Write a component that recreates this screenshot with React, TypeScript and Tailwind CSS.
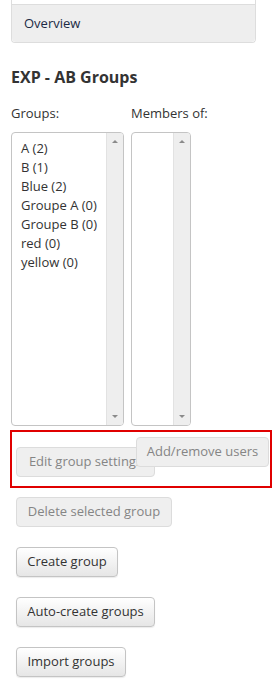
import React from "react";

const items = ["A (2)", "B (1)", "Blue (2)", "Groupe A (0)", "Groupe B (0)", "red (0)", "yellow (0)"];

function Scrollbar() {
  return (
    <div className="flex h-full w-[17px] flex-col justify-between bg-[#eeeeee] border-l border-[#e2e2e2]">
      <div className="flex h-[17px] items-center justify-center">
        <div className="h-0 w-0 border-x-[3px] border-b-[3px] border-x-transparent border-b-[#8a8a8a]" />
      </div>
      <div className="flex h-[17px] items-center justify-center">
        <div className="h-0 w-0 border-x-[3px] border-t-[3px] border-x-transparent border-t-[#8a8a8a]" />
      </div>
    </div>
  );
}

function Btn({ label, w, disabled, className = "" }: { label: string; w: string; disabled?: boolean; className?: string }) {
  return (
    <div
      className={
        "flex h-[30px] shrink-0 items-center justify-center rounded-[4px] border text-[13px] " +
        (disabled
          ? "border-[#dcdcdc] bg-[#efefef] text-[#858585] "
          : "border-[#c4c4c4] bg-gradient-to-b from-[#ffffff] to-[#e6e6e6] text-[#333333] shadow-[0_1px_1px_rgba(0,0,0,0.08)] ") +
        w +
        " " +
        className
      }
    >
      {label}
    </div>
  );
}

export default function App() {
  return (
    <div className="h-[684px] w-[274px] overflow-hidden bg-white text-[#333333]" style={{ fontFamily: '"Open Sans", "Liberation Sans", sans-serif' }}>
      <div className="ml-[11px] w-[245px] rounded-b-[4px] border-x border-b border-[#dddddd]">
        <div className="h-[4px] bg-white" />
        <div className="flex h-[38px] items-center rounded-b-[4px] border-t border-[#dddddd] bg-[#eeeeee] pl-[12px] text-[13px] text-[#1b2a45]">
          Overview
        </div>
      </div>

      <div className="ml-[11px] mt-[24px] text-[16px] font-bold leading-[20px] text-[#333333]">EXP - AB Groups</div>

      <div className="ml-[11px] mt-[17px] flex text-[13px] leading-[18px]">
        <div className="w-[120px]">Groups:</div>
        <div>Members of:</div>
      </div>

      <div className="ml-[11px] mt-[10px] flex gap-[7px]">
        <div className="flex h-[294px] w-[113px] overflow-hidden rounded-[4px] border border-[#c4c4c4]">
          <div className="flex-1 pl-[9px] pt-[6px] text-[13px] leading-[19px] text-[#333333]">
            {items.map((it) => (
              <div key={it} className="whitespace-nowrap">{it}</div>
            ))}
          </div>
          <Scrollbar />
        </div>
        <div className="flex h-[294px] w-[60px] overflow-hidden rounded-[4px] border border-[#c4c4c4]">
          <div className="flex-1" />
          <Scrollbar />
        </div>
      </div>

      <div className="ml-[10px] mt-[4px] flex h-[58px] w-[262px] items-start border-2 border-[#e00000]">
        <Btn label="Edit group settings" w="w-[139px]" disabled className="ml-[4px] mt-[15px]" />
        <Btn label="Add/remove users" w="w-[133px]" disabled className="relative ml-[-19px] mt-[5px]" />
      </div>

      <div className="ml-[16px] mt-[9px] flex flex-col gap-[20px]">
        <Btn label="Delete selected group" w="w-[156px]" disabled />
        <Btn label="Create group" w="w-[102px]" />
        <Btn label="Auto-create groups" w="w-[139px]" />
        <Btn label="Import groups" w="w-[110px]" />
      </div>
    </div>
  );
}
